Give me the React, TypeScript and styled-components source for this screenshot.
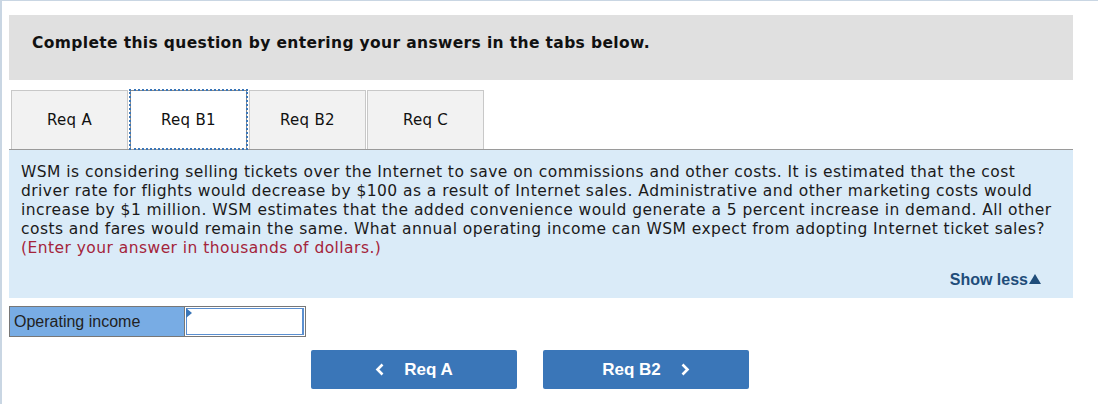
import React from "react";
import styled, { createGlobalStyle } from "styled-components";

const Global = createGlobalStyle`
  html, body { margin: 0; padding: 0; background: #ffffff; }
  body { font-family: "DejaVu Sans", Verdana, sans-serif; }
`;

const Frame = styled.div`
  width: 1098px;
  height: 404px;
  box-sizing: border-box;
  border-top: 1px solid #c9d6e3;
  border-left: 2px solid #c9d6e3;
  padding: 14px 25px 0 7px;
  overflow: hidden;
`;

const Header = styled.div`
  height: 65px;
  background: #e0e0e0;
  display: flex;
  align-items: center;
  padding-left: 23px;
  padding-bottom: 10px;
  box-sizing: border-box;
  font-family: "DejaVu Sans", Verdana, sans-serif;
  font-weight: bold;
  font-size: 15.5px;
  letter-spacing: 0.36px;
  color: #111;
`;

const TabBar = styled.div`
  margin-top: 10px;
  display: flex;
  gap: 1px;
  padding-left: 2px;
  border-bottom: 1px solid #9a9a9a;
`;

const Tab = styled.div<{ $active?: boolean }>`
  width: 117px;
  height: 59px;
  box-sizing: border-box;
  display: flex;
  align-items: center;
  justify-content: center;
  font-size: 15px;
  letter-spacing: 0.3px;
  color: #111;
  background: ${(p) => (p.$active ? "#ffffff" : "#f2f2f2")};
  border: 1px solid ${(p) => (p.$active ? "#8a8a8a" : "#c8c8c8")};
  border-bottom: none;
  outline: ${(p) => (p.$active ? "2px dotted #3a76b8" : "none")};
  outline-offset: -1px;
  margin-left: ${(p) => (p.$active ? "1px" : "0")};
  margin-right: ${(p) => (p.$active ? "1px" : "0")};
`;

const Panel = styled.div`
  height: 148px;
  box-sizing: border-box;
  background: #daebf8;
  padding: 13px 32px 0 12px;
  display: flex;
  flex-direction: column;
`;

const Para = styled.p`
  margin: 0;
  font-size: 15.5px;
  letter-spacing: 0.45px;
  line-height: 19px;
  white-space: nowrap;
  color: #1a1a1a;
`;

const Hint = styled.span`
  color: #a4243b;
`;

const ShowLess = styled.div`
  margin-top: auto;
  margin-bottom: 9px;
  align-self: flex-end;
  font-family: "Liberation Sans", Arial, sans-serif;
  font-weight: bold;
  font-size: 16px;
  color: #1f4d7a;
  display: flex;
  align-items: center;
`;

const Tri = styled.span`
  width: 0;
  height: 0;
  margin-left: 1px;
  margin-bottom: 2px;
  border-left: 6px solid transparent;
  border-right: 6px solid transparent;
  border-bottom: 10px solid #1f4d7a;
`;

const AnswerRow = styled.div`
  margin-top: 8px;
  display: flex;
  height: 31px;
`;

const Label = styled.div`
  width: 175px;
  box-sizing: border-box;
  background: #78ace4;
  border: 1px solid #777;
  border-right: none;
  display: flex;
  align-items: center;
  padding-left: 4px;
  font-family: "Liberation Sans", Arial, sans-serif;
  font-size: 16px;
  color: #222;
`;

const InputCell = styled.div`
  position: relative;
  width: 122px;
  box-sizing: border-box;
  border: 1px solid #777;
  background: #fff;
  padding: 1px;
`;

const InputBox = styled.div`
  height: 100%;
  box-sizing: border-box;
  border: 1px solid #5b8fd0;
  border-right-width: 2px;
`;

const Marker = styled.span`
  position: absolute;
  left: 1px;
  top: 1px;
  width: 0;
  height: 0;
  border-top: 5px solid transparent;
  border-bottom: 5px solid transparent;
  border-left: 6px solid #3a76b8;
`;

const NavRow = styled.div`
  margin-top: 13px;
  margin-left: 302px;
  display: flex;
  gap: 26px;
`;

const NavButton = styled.div`
  width: 206px;
  height: 39px;
  box-sizing: border-box;
  background: #3a76b8;
  border-radius: 2px;
  display: flex;
  align-items: center;
  justify-content: center;
  gap: 19px;
  color: #fff;
  font-family: "Liberation Sans", Arial, sans-serif;
  font-weight: bold;
  font-size: 17px;
`;

const Chevron = ({ dir }: { dir: "left" | "right" }) => (
  <svg width="10" height="13" viewBox="0 0 10 13">
    <path
      d={dir === "left" ? "M7.5 1.5 L2.5 6.5 L7.5 11.5" : "M2.5 1.5 L7.5 6.5 L2.5 11.5"}
      fill="none"
      stroke="#fff"
      strokeWidth="2.6"
    />
  </svg>
);

export default function App() {
  return (
    <>
      <Global />
      <Frame>
        <Header>Complete this question by entering your answers in the tabs below.</Header>
        <TabBar>
          <Tab>Req A</Tab>
          <Tab $active>Req B1</Tab>
          <Tab>Req B2</Tab>
          <Tab>Req C</Tab>
        </TabBar>
        <Panel>
          <Para>
            WSM is considering selling tickets over the Internet to save on commissions and other costs. It is estimated that the cost
            <br />
            driver rate for flights would decrease by $100 as a result of Internet sales. Administrative and other marketing costs would
            <br />
            increase by $1 million. WSM estimates that the added convenience would generate a 5 percent increase in demand. All other
            <br />
            costs and fares would remain the same. What annual operating income can WSM expect from adopting Internet ticket sales?
            <br />
            <Hint>(Enter your answer in thousands of dollars.)</Hint>
          </Para>
          <ShowLess>
            Show less<Tri />
          </ShowLess>
        </Panel>
        <AnswerRow>
          <Label>Operating income</Label>
          <InputCell>
            <InputBox />
            <Marker />
          </InputCell>
        </AnswerRow>
        <NavRow>
          <NavButton>
            <Chevron dir="left" />
            <span>Req A</span>
          </NavButton>
          <NavButton>
            <span>Req B2</span>
            <Chevron dir="right" />
          </NavButton>
        </NavRow>
      </Frame>
    </>
  );
}
